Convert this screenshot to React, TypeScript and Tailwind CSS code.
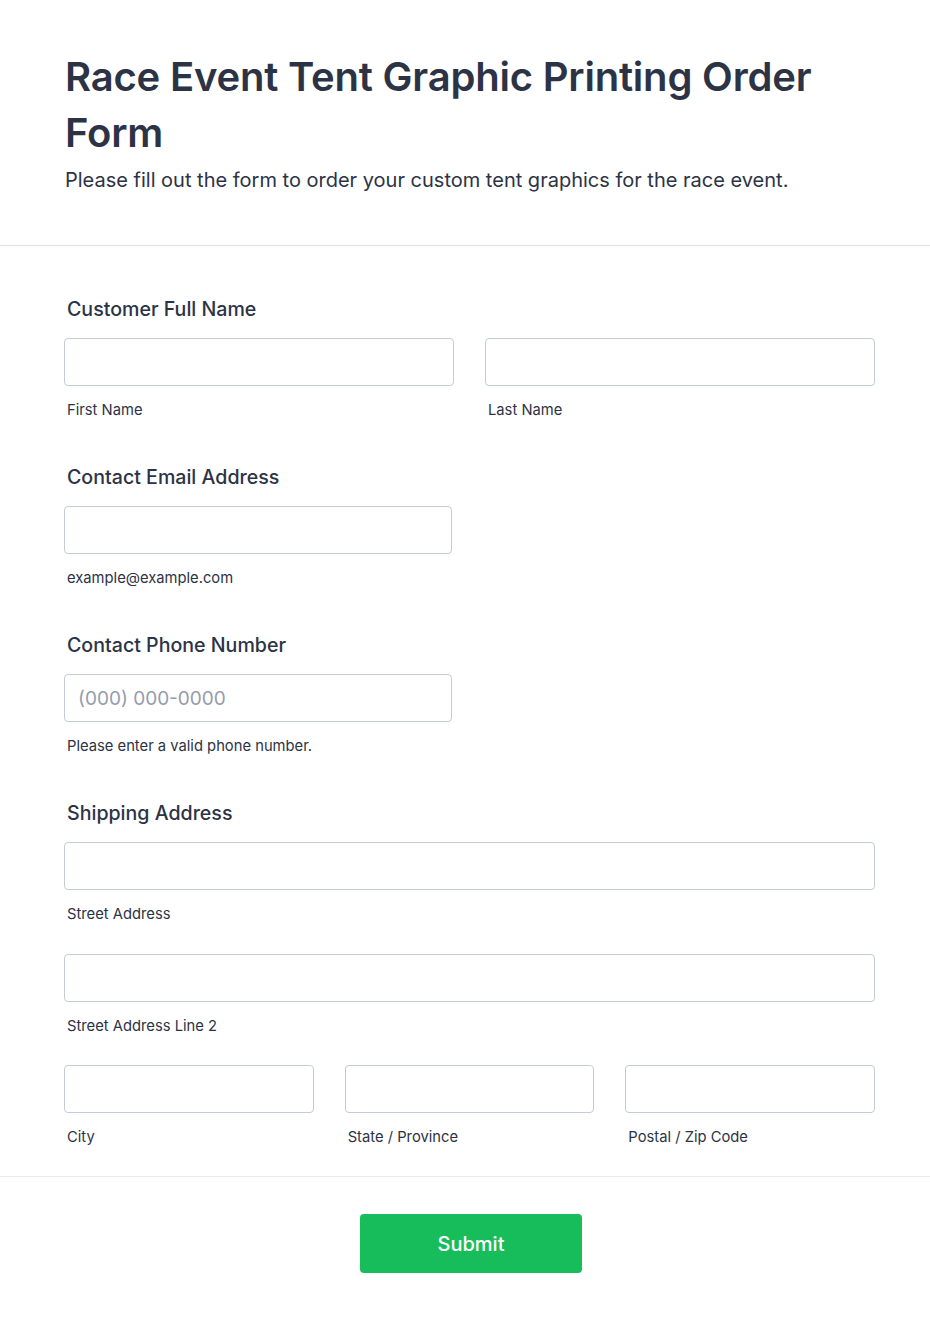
import { useState } from "react";

function Field({
  label,
  children,
  className = "",
}: {
  label: string;
  children: React.ReactNode;
  className?: string;
}) {
  return (
    <div className={`flex flex-col ${className}`}>
      <label className="pl-[3px] text-[19.6px] leading-[26px] font-medium text-[#2c3345]">
        {label}
      </label>
      <div className="mt-[16px] flex flex-col">{children}</div>
    </div>
  );
}

function TextBox({
  sub,
  placeholder,
  className = "",
}: {
  sub?: string;
  placeholder?: string;
  className?: string;
}) {
  const [value, setValue] = useState("");
  return (
    <div className={`flex flex-col ${className}`}>
      <input
        type="text"
        value={value}
        placeholder={placeholder}
        onChange={(e) => setValue(e.target.value)}
        className="h-[48px] w-full rounded-[4px] border border-[#c3cad8] bg-white px-[13px] text-[19px] text-[#2c3345] outline-none placeholder:text-[#959cab] focus:border-[#2e69ff]"
      />
      {sub && (
        <span className="mt-[14px] pl-[3px] text-[14.75px] leading-[20px] text-[#2c3345]">
          {sub}
        </span>
      )}
    </div>
  );
}

export default function App() {
  return (
    <div className="min-h-screen bg-white font-['Inter',sans-serif] text-[#2c3345]">
      <header className="border-b border-[#dcdee6] pl-[65px] pr-[55px] pt-[49px] pb-[51px]">
        <h1 className="text-[40px] leading-[56px] font-semibold tracking-[-0.2px]">
          Race Event Tent Graphic Printing Order Form
        </h1>
        <p className="mt-[5px] text-[20px] leading-[28px]">
          Please fill out the form to order your custom tent graphics for the
          race event.
        </p>
      </header>

      <form onSubmit={(e) => e.preventDefault()} className="flex flex-col">
        <div className="flex flex-col gap-[44px] border-b border-[#eaebf2] pl-[64px] pr-[55px] pt-[50px] pb-[29px]">
          <Field label="Customer Full Name">
            <div className="grid grid-cols-2 gap-[31px]">
              <TextBox sub="First Name" />
              <TextBox sub="Last Name" />
            </div>
          </Field>

          <Field label="Contact Email Address">
            <TextBox sub="example@example.com" className="w-[388px]" />
          </Field>

          <Field label="Contact Phone Number">
            <TextBox
              sub="Please enter a valid phone number."
              placeholder="(000) 000-0000"
              className="w-[388px]"
            />
          </Field>

          <Field label="Shipping Address">
            <div className="flex flex-col gap-[30px]">
              <TextBox sub="Street Address" />
              <TextBox sub="Street Address Line 2" />
              <div className="-mt-[1px] grid grid-cols-3 gap-[31px]">
                <TextBox sub="City" />
                <TextBox sub="State / Province" />
                <TextBox sub="Postal / Zip Code" />
              </div>
            </div>
          </Field>
        </div>

        <div className="flex justify-center pt-[37px] pb-[50px]">
          <button
            type="submit"
            className="ml-[12px] h-[59px] w-[222px] rounded-[4px] bg-[#18bd5b] text-[20px] font-medium text-white hover:bg-[#16a951]"
          >
            Submit
          </button>
        </div>
      </form>
    </div>
  );
}
